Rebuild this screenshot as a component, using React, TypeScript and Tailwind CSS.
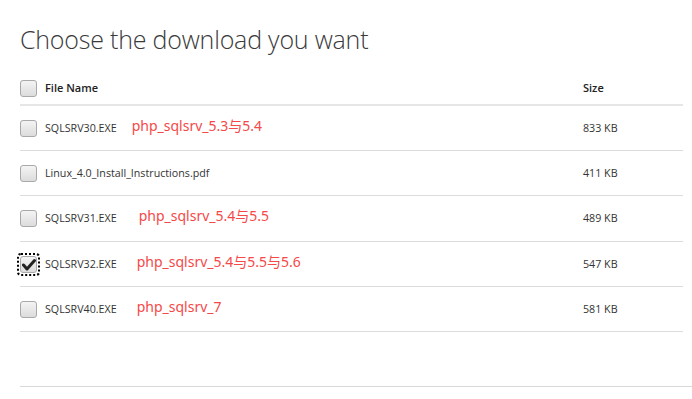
import React from "react";

type Row = {
  name: string;
  size: string;
  note?: string;
  noteOffset: string;
  height: string;
  checked?: boolean;
};

const rows: Row[] = [
  { name: "SQLSRV30.EXE", size: "833 KB", note: "php_sqlsrv_5.3与5.4", noteOffset: "ml-[7px]", height: "h-[45px]" },
  { name: "Linux_4.0_Install_Instructions.pdf", size: "411 KB", noteOffset: "", height: "h-[45px]" },
  { name: "SQLSRV31.EXE", size: "489 KB", note: "php_sqlsrv_5.4与5.5", noteOffset: "ml-[14px]", height: "h-[46px]" },
  { name: "SQLSRV32.EXE", size: "547 KB", note: "php_sqlsrv_5.4与5.5与5.6", noteOffset: "ml-[12px]", height: "h-[45px]", checked: true },
  { name: "SQLSRV40.EXE", size: "581 KB", note: "php_sqlsrv_7", noteOffset: "ml-[12px]", height: "h-[45px]" },
];

function Checkbox({ checked }: { checked?: boolean }) {
  const box = (
    <div className="w-[17px] h-[17px] rounded-[3px] border border-[#a9a9a9] bg-gradient-to-b from-[#f4f4f4] to-[#dcdcdc] flex items-center justify-center shrink-0">
      {checked && (
        <svg width="14" height="13" viewBox="0 0 14 13">
          <path d="M1.5 7 L5 11 L12.5 2.5" fill="none" stroke="#222" strokeWidth="3" strokeLinecap="round" strokeLinejoin="round" />
        </svg>
      )}
    </div>
  );
  if (!checked) return box;
  return <div className="outline-2 outline-dotted outline-black outline-offset-[1px] rounded-[1px]">{box}</div>;
}

export default function App() {
  return (
    <div className="w-[692px] h-[399px] bg-white overflow-hidden font-['Open_Sans','Noto_Sans',sans-serif] text-[#333]">
      <div className="pl-[20px] pt-[21px]">
        <h1 className="text-[25px] leading-[36px] font-light text-[#3a3a3a] tracking-[-0.2px]">
          Choose the download you want
        </h1>
        <div className="w-[663px] mt-[16px]">
          <div className="flex items-center h-[33px] border-b-2 border-[#e6e6e6]">
            <div className="flex items-center gap-[8px] flex-1">
              <Checkbox />
              <span className="text-[11px] font-semibold text-[#222]">File Name</span>
            </div>
            <div className="w-[100px] text-[11px] font-semibold text-[#222]">Size</div>
          </div>
          {rows.map((row) => (
            <div key={row.name} className={`flex items-center ${row.height} border-b border-[#dcdcdc]`}>
              <div className="flex items-center gap-[8px] flex-1">
                <Checkbox checked={row.checked} />
                <span className="text-[10.7px] text-[#333]">{row.name}</span>
                {row.note && (
                  <span
                    className={`${row.noteOffset} -mt-[6px] text-[14px] text-[#f54848] font-['Noto_Sans','Noto_Sans_CJK_SC',sans-serif]`}
                  >
                    {row.note}
                  </span>
                )}
              </div>
              <div className="w-[100px] text-[10.7px] text-[#333]">{row.size}</div>
            </div>
          ))}
        </div>
        <div className="mt-[54px] border-b border-[#d9d9d9]" />
      </div>
    </div>
  );
}
